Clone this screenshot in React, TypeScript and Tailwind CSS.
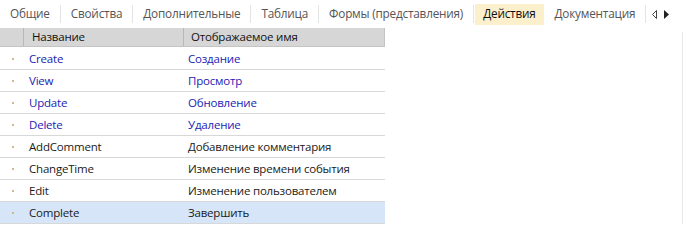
import React from 'react';

type Row = { name: string; title: string; std: boolean };

const rows: Row[] = [
  { name: 'Create', title: 'Создание', std: true },
  { name: 'View', title: 'Просмотр', std: true },
  { name: 'Update', title: 'Обновление', std: true },
  { name: 'Delete', title: 'Удаление', std: true },
  { name: 'AddComment', title: 'Добавление комментария', std: false },
  { name: 'ChangeTime', title: 'Изменение времени события', std: false },
  { name: 'Edit', title: 'Изменение пользователем', std: false },
  { name: 'Complete', title: 'Завершить', std: false },
];

const tabs = ['Общие', 'Свойства', 'Дополнительные', 'Таблица', 'Формы (представления)', 'Действия', 'Документация'];

const App: React.FC = () => {
  return (
    <div className="w-[685px] h-[243px] bg-white overflow-hidden text-[11.5px] tracking-[-0.2px] text-[#222]" style={{ fontFamily: '"Open Sans", "Noto Sans", sans-serif' }}>
      {/* TABS */}
      <div className="flex items-center h-[28px] whitespace-nowrap text-[11.75px]">
        {tabs.map((t, i) => (
          <React.Fragment key={t}>
            {i > 0 && tabs[i - 1] !== 'Действия' && <div className="w-px h-[18px] bg-[#e4e4e4] shrink-0" />}
            {t === 'Действия' ? (
              <div className="h-[21px] flex items-center shrink-0 px-[8px] mx-[1px] bg-[#fcefcc] text-[#111]">{t}</div>
            ) : (
              <div className="h-[21px] flex items-center shrink-0 px-[10px] text-[#555]">{t}</div>
            )}
          </React.Fragment>
        ))}
        <div className="w-px h-[18px] bg-[#e4e4e4] shrink-0" />
        <div className="flex items-center gap-[7px] ml-[6px] shrink-0">
          <svg width="5" height="9" viewBox="0 0 5 9"><path d="M4.5 0.5 L0.5 4.5 L4.5 8.5 Z" fill="none" stroke="#444" strokeWidth="1" /></svg>
          <svg width="5" height="9" viewBox="0 0 5 9"><path d="M0 0 L5 4.5 L0 9 Z" fill="#222" /></svg>
        </div>
      </div>

      <div className="flex">
        {/* TABLE */}
        <div className="w-[385px]">
          <div className="flex h-[19px] bg-[#d6d6d6] border-b border-[#c4c4c4] border-r text-[#111]">
            <div className="w-[24px] border-r border-[#b8b8b8]" />
            <div className="w-[160px] border-r border-[#b8b8b8] pl-[8px] flex items-center">Название</div>
            <div className="flex-1 pl-[7px] flex items-center">Отображаемое имя</div>
          </div>
          <div className="h-[1px]" />
          {rows.map((r) => (
            <div
              key={r.name}
              className={`flex h-[22px] border-b border-[#d8d8d8] ${r.name === 'Complete' ? 'bg-[#d6e6f8]' : ''} ${r.std ? 'text-[#1c1cb4]' : 'text-[#1a1a1a]'}`}
            >
              <div className="w-[24px] flex items-center justify-center pl-[2px]">
                <div className="w-[2px] h-[2px] bg-[#d2b98c]" />
              </div>
              <div className="w-[160px] pl-[5px] flex items-center">{r.name}</div>
              <div className="flex-1 pl-[4px] flex items-center">{r.title}</div>
            </div>
          ))}
        </div>
        <div className="flex-1" />
        <div className="w-px bg-[#e8e8e8] mt-[4px] mr-[2px]" />
      </div>
    </div>
  );
};

export default App;
